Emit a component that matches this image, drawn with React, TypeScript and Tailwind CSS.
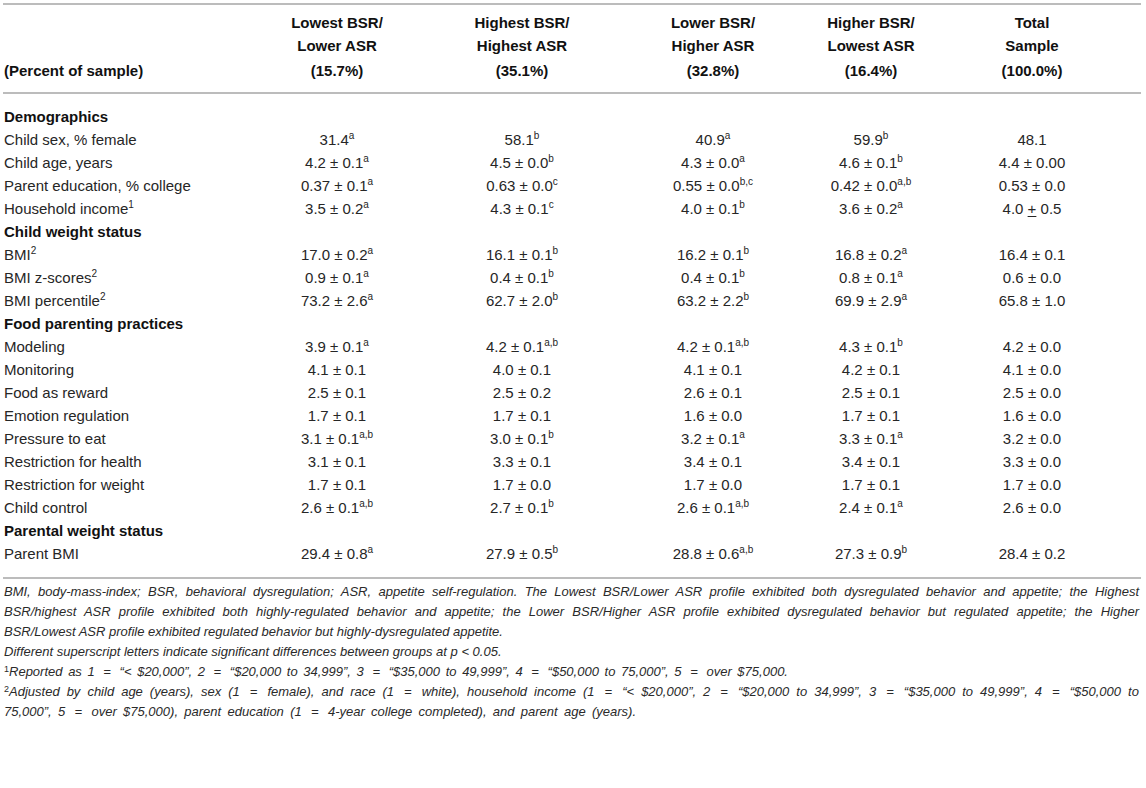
import React from "react";

type Cell = { v: string; s?: string; u?: boolean };
type Row = { label: string; sup?: string; cells?: Cell[]; section?: boolean };

const c = (v: string, s?: string): Cell => ({ v, s });

const rows: Row[] = [
  { label: "Demographics", section: true },
  { label: "Child sex, % female", cells: [c("31.4", "a"), c("58.1", "b"), c("40.9", "a"), c("59.9", "b"), c("48.1")] },
  { label: "Child age, years", cells: [c("4.2 ± 0.1", "a"), c("4.5 ± 0.0", "b"), c("4.3 ± 0.0", "a"), c("4.6 ± 0.1", "b"), c("4.4 ± 0.00")] },
  { label: "Parent education, % college", cells: [c("0.37 ± 0.1", "a"), c("0.63 ± 0.0", "c"), c("0.55 ± 0.0", "b,c"), c("0.42 ± 0.0", "a,b"), c("0.53 ± 0.0")] },
  { label: "Household income", sup: "1", cells: [c("3.5 ± 0.2", "a"), c("4.3 ± 0.1", "c"), c("4.0 ± 0.1", "b"), c("3.6 ± 0.2", "a"), { v: "4.0 + 0.5", u: true }] },
  { label: "Child weight status", section: true },
  { label: "BMI", sup: "2", cells: [c("17.0 ± 0.2", "a"), c("16.1 ± 0.1", "b"), c("16.2 ± 0.1", "b"), c("16.8 ± 0.2", "a"), c("16.4 ± 0.1")] },
  { label: "BMI z-scores", sup: "2", cells: [c("0.9 ± 0.1", "a"), c("0.4 ± 0.1", "b"), c("0.4 ± 0.1", "b"), c("0.8 ± 0.1", "a"), c("0.6 ± 0.0")] },
  { label: "BMI percentile", sup: "2", cells: [c("73.2 ± 2.6", "a"), c("62.7 ± 2.0", "b"), c("63.2 ± 2.2", "b"), c("69.9 ± 2.9", "a"), c("65.8 ± 1.0")] },
  { label: "Food parenting practices", section: true },
  { label: "Modeling", cells: [c("3.9 ± 0.1", "a"), c("4.2 ± 0.1", "a,b"), c("4.2 ± 0.1", "a,b"), c("4.3 ± 0.1", "b"), c("4.2 ± 0.0")] },
  { label: "Monitoring", cells: [c("4.1 ± 0.1"), c("4.0 ± 0.1"), c("4.1 ± 0.1"), c("4.2 ± 0.1"), c("4.1 ± 0.0")] },
  { label: "Food as reward", cells: [c("2.5 ± 0.1"), c("2.5 ± 0.2"), c("2.6 ± 0.1"), c("2.5 ± 0.1"), c("2.5 ± 0.0")] },
  { label: "Emotion regulation", cells: [c("1.7 ± 0.1"), c("1.7 ± 0.1"), c("1.6 ± 0.0"), c("1.7 ± 0.1"), c("1.6 ± 0.0")] },
  { label: "Pressure to eat", cells: [c("3.1 ± 0.1", "a,b"), c("3.0 ± 0.1", "b"), c("3.2 ± 0.1", "a"), c("3.3 ± 0.1", "a"), c("3.2 ± 0.0")] },
  { label: "Restriction for health", cells: [c("3.1 ± 0.1"), c("3.3 ± 0.1"), c("3.4 ± 0.1"), c("3.4 ± 0.1"), c("3.3 ± 0.0")] },
  { label: "Restriction for weight", cells: [c("1.7 ± 0.1"), c("1.7 ± 0.0"), c("1.7 ± 0.0"), c("1.7 ± 0.1"), c("1.7 ± 0.0")] },
  { label: "Child control", cells: [c("2.6 ± 0.1", "a,b"), c("2.7 ± 0.1", "b"), c("2.6 ± 0.1", "a,b"), c("2.4 ± 0.1", "a"), c("2.6 ± 0.0")] },
  { label: "Parental weight status", section: true },
  { label: "Parent BMI", cells: [c("29.4 ± 0.8", "a"), c("27.9 ± 0.5", "b"), c("28.8 ± 0.6", "a,b"), c("27.3 ± 0.9", "b"), c("28.4 ± 0.2")] },
];

const headers = [
  ["Lowest BSR/", "Lower ASR", "(15.7%)"],
  ["Highest BSR/", "Highest ASR", "(35.1%)"],
  ["Lower BSR/", "Higher ASR", "(32.8%)"],
  ["Higher BSR/", "Lowest ASR", "(16.4%)"],
  ["Total", "Sample", "(100.0%)"],
];

const grid = "grid grid-cols-[241px_186px_184px_198px_118px_204px]";
// footnote lines that run edge to edge, as in the typeset original
const spread = "text-justify [text-align-last:justify]";

function Sup({ children }: { children: React.ReactNode }) {
  return <span className="relative top-[-6px] text-[10px] leading-none">{children}</span>;
}

function NoteMark({ n }: { n: string }) {
  return <span className="relative top-[-4px] text-[9px] not-italic leading-none">{n}</span>;
}

// the original sets "=" as a math sign with wide side bearings
function Eq({ text }: { text: string }) {
  const parts = text.split(" = ");
  return (
    <>
      {parts.map((p, i) => (
        <React.Fragment key={i}>
          {i > 0 && (
            <>
              {" "}
              <span className="mx-[3px]">=</span>{" "}
            </>
          )}
          {p}
        </React.Fragment>
      ))}
    </>
  );
}

function Value({ cell }: { cell: Cell }) {
  if (cell.u) {
    return (
      <span>
        4.0 <span className="underline underline-offset-2">+</span> 0.5
      </span>
    );
  }
  return (
    <span>
      {cell.v}
      {cell.s && <Sup>{cell.s}</Sup>}
    </span>
  );
}

export default function App() {
  return (
    <div className="min-h-[788px] bg-white pt-[3px] font-['Liberation_Sans',Arial,sans-serif]">
      <div className="ml-[3px] w-[1138px] text-[15px] text-[#262626]">
        {/* header */}
        <div className={`${grid} border-y-2 border-[#bcbcbc] pt-[6px] pb-[10px] font-bold text-[#111]`}>
          <div className="flex flex-col justify-end pl-[1px] leading-[23px]">(Percent of sample)</div>
          {headers.map((h) => (
            <div key={h[0]} className="flex flex-col items-center leading-[23px]">
              <span>{h[0]}</span>
              <span>{h[1]}</span>
              <span className="mt-[2px]">{h[2]}</span>
            </div>
          ))}
        </div>

        {/* body */}
        <div className="border-b-2 border-[#bcbcbc] pt-[11px] pb-[12px]">
          {rows.map((r) =>
            r.section ? (
              <div key={r.label} className="pl-[1px] font-bold leading-[23px] text-[#111]">
                {r.label}
              </div>
            ) : (
              <div key={r.label} className={`${grid} leading-[23px]`}>
                <div className="pl-[1px]">
                  {r.label}
                  {r.sup && <Sup>{r.sup}</Sup>}
                </div>
                {r.cells!.map((cell, i) => (
                  <div key={i} className="text-center">
                    <Value cell={cell} />
                  </div>
                ))}
              </div>
            )
          )}
        </div>

        {/* footnotes */}
        <div className="pt-[3px] pl-[1px] pr-[2px] text-[13px] italic leading-[20px] text-[#2a2a2a]">
          <div className={spread}>
            BMI, body-mass-index; BSR, behavioral dysregulation; ASR, appetite self-regulation. The Lowest BSR/Lower
            ASR profile exhibited both dysregulated behavior and appetite; the Highest
          </div>
          <div className={spread}>
            BSR/highest ASR profile exhibited both highly-regulated behavior and appetite; the Lower BSR/Higher ASR
            profile exhibited dysregulated behavior but regulated appetite; the Higher
          </div>
          <div>BSR/Lowest ASR profile exhibited regulated behavior but highly-dysregulated appetite.</div>
          <div>Different superscript letters indicate significant differences between groups at p &lt; 0.05.</div>
          <div className={`w-[784px] ${spread}`}>
            <NoteMark n="1" />
            <Eq text="Reported as 1 = “< $20,000”, 2 = “$20,000 to 34,999”, 3 = “$35,000 to 49,999”, 4 = “$50,000 to 75,000”, 5 = over $75,000." />
          </div>
          <div className={spread}>
            <NoteMark n="2" />
            <Eq text="Adjusted by child age (years), sex (1 = female), and race (1 = white), household income (1 = “< $20,000”, 2 = “$20,000 to 34,999”, 3 = “$35,000 to 49,999”, 4 = “$50,000 to" />
          </div>
          <div className={`w-[632px] ${spread}`}>
            <Eq text="75,000”, 5 = over $75,000), parent education (1 = 4-year college completed), and parent age (years)." />
          </div>
        </div>
      </div>
    </div>
  );
}
